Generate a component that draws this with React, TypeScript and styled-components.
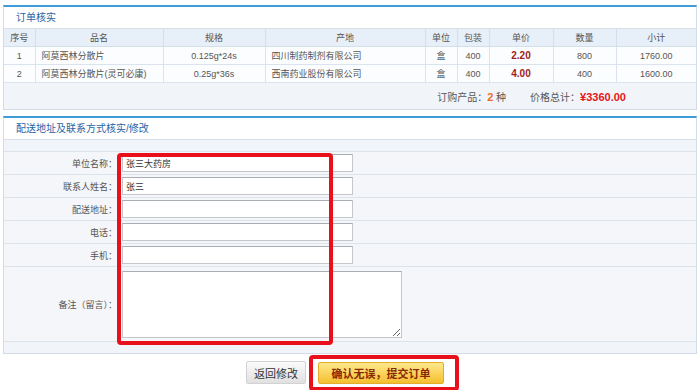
import styled, { createGlobalStyle } from "styled-components";

const GlobalStyle = createGlobalStyle`
  body {
    margin: 0;
    background: #fff;
    font-family: "Liberation Sans", "Noto Sans CJK SC", sans-serif;
    color: #555;
  }
`;

type Item = {
  no: number;
  name: string;
  spec: string;
  origin: string;
  unit: string;
  pack: number;
  price: string;
  qty: number;
  subtotal: string;
};

const items: Item[] = [
  { no: 1, name: "阿莫西林分散片", spec: "0.125g*24s", origin: "四川制药制剂有限公司", unit: "盒", pack: 400, price: "2.20", qty: 800, subtotal: "1760.00" },
  { no: 2, name: "阿莫西林分散片(灵可必康)", spec: "0.25g*36s", origin: "西南药业股份有限公司", unit: "盒", pack: 400, price: "4.00", qty: 400, subtotal: "1600.00" },
];

const columns = [
  { title: "序号", width: 31 },
  { title: "品名", width: 128 },
  { title: "规格", width: 102 },
  { title: "产地", width: 160 },
  { title: "单位", width: 32 },
  { title: "包装", width: 32 },
  { title: "单价", width: 64 },
  { title: "数量", width: 63 },
  { title: "小计", width: 80 },
];

const fields = [
  { label: "单位名称：", value: "张三大药房" },
  { label: "联系人姓名：", value: "张三" },
  { label: "配送地址：", value: "" },
  { label: "电话：", value: "" },
  { label: "手机：", value: "" },
];

const App = () => {
  return (
    <Page>
      <GlobalStyle />
      <Panel>
        <PanelTitle>订单核实</PanelTitle>
        <OrderTable>
          <colgroup>
            {columns.map((c) => (
              <col key={c.title} style={{ width: c.width }} />
            ))}
          </colgroup>
          <thead>
            <tr>
              {columns.map((c) => (
                <HeadCell key={c.title}>{c.title}</HeadCell>
              ))}
            </tr>
          </thead>
          <tbody>
            {items.map((it) => (
              <tr key={it.no}>
                <Cell>{it.no}</Cell>
                <Cell $left>{it.name}</Cell>
                <Cell>{it.spec}</Cell>
                <Cell $left>{it.origin}</Cell>
                <Cell>{it.unit}</Cell>
                <Cell>{it.pack}</Cell>
                <Cell>
                  <Price>{it.price}</Price>
                </Cell>
                <Cell>{it.qty}</Cell>
                <Cell>{it.subtotal}</Cell>
              </tr>
            ))}
            <tr>
              <SummaryCell colSpan={9}>
                订购产品：<Count>2</Count> 种
                <TotalLabel>价格总计：</TotalLabel>
                <Total>¥3360.00</Total>
              </SummaryCell>
            </tr>
          </tbody>
        </OrderTable>
      </Panel>

      <Panel>
        <PanelTitle>配送地址及联系方式核实/修改</PanelTitle>
        <Stripe />
        {fields.map((f) => (
          <FormRow key={f.label}>
            <Label>{f.label}</Label>
            <FieldCell>
              <TextInput defaultValue={f.value} />
            </FieldCell>
          </FormRow>
        ))}
        <FormRow $tall>
          <Label>备注（留言）：</Label>
          <FieldCell>
            <Note />
          </FieldCell>
        </FormRow>
        <Stripe $last />
      </Panel>

      <Actions>
        <BackButton>返回修改</BackButton>
        <SubmitButton>确认无误，提交订单</SubmitButton>
      </Actions>

      <Highlight style={{ left: 117, top: 153, width: 216, height: 192 }} />
      <Highlight style={{ left: 309, top: 355, width: 150, height: 36 }} />
    </Page>
  );
};

export default App;

const Page = styled.div`
  position: relative;
  width: 700px;
  height: 390px;
  padding: 5px 3px 0 3px;
  box-sizing: border-box;
  overflow: hidden;
`;

const Panel = styled.section`
  border: 1px solid #d3dce6;
  border-top: 2px solid #3e9bd5;
  margin-bottom: 6px;
  background: #fff;
`;

const PanelTitle = styled.h3`
  margin: 0;
  height: 21px;
  line-height: 21px;
  padding-left: 12px;
  font-size: 10px;
  font-weight: normal;
  color: #2764a6;
  border-bottom: 1px solid #d8e0e9;
`;

const OrderTable = styled.table`
  width: 100%;
  border-collapse: collapse;
  table-layout: fixed;
  font-size: 9px;
  color: #555;
`;

const HeadCell = styled.th`
  height: 17px;
  padding: 0;
  font-weight: normal;
  background: #e7eff8;
  border: 1px solid #d3dfeb;
  border-top: none;
  color: #555;
  &:first-child { border-left: none; }
  &:last-child { border-right: none; }
`;

const Cell = styled.td<{ $left?: boolean }>`
  height: 17px;
  padding: 0 6px;
  text-align: ${(p) => (p.$left ? "left" : "center")};
  background: #fcfdfe;
  border: 1px solid #dbe4ee;
  white-space: nowrap;
  overflow: hidden;
  &:first-child { border-left: none; }
  &:last-child { border-right: none; }
`;

const Price = styled.span`
  font-weight: bold;
  font-size: 10px;
  color: #9e1c1c;
`;

const SummaryCell = styled.td`
  height: 26px;
  padding: 0 70px 0 0;
  text-align: right;
  background: #f1f5f9;
  font-size: 10px;
  color: #555;
  border-top: 1px solid #dbe4ee;
`;

const Count = styled.b`
  color: #f06a1e;
  font-size: 11px;
`;

const TotalLabel = styled.span`
  margin-left: 24px;
`;

const Total = styled.b`
  color: #e6141b;
  font-size: 11px;
`;

const Stripe = styled.div<{ $last?: boolean }>`
  height: 11px;
  background: #f1f4f8;
  border-bottom: ${(p) => (p.$last ? "none" : "1px solid #dde3ea")};
`;

const FormRow = styled.div<{ $tall?: boolean }>`
  display: grid;
  grid-template-columns: 117px 1fr;
  align-items: center;
  height: ${(p) => (p.$tall ? "74px" : "22px")};
  background: #f4f6f9;
  border-bottom: 1px solid #dde3ea;
`;

const Label = styled.div`
  text-align: right;
  padding-right: 4px;
  font-size: 9px;
  color: #555;
`;

const FieldCell = styled.div`
  display: flex;
  align-items: center;
  padding-left: 1px;
`;

const TextInput = styled.input`
  box-sizing: border-box;
  width: 231px;
  height: 18px;
  padding: 0 3px;
  border: 1px solid #c3c7cc;
  border-top-color: #a9aeb4;
  background: #fff;
  font-family: "Liberation Sans", "Noto Sans CJK SC", sans-serif;
  font-size: 9px;
  color: #333;
  outline: none;
`;

const Note = styled.textarea`
  box-sizing: border-box;
  width: 280px;
  height: 67px;
  border: 1px solid #c3c7cc;
  border-top-color: #a9aeb4;
  background: #fff;
  outline: none;
`;

const Actions = styled.div`
  display: flex;
  justify-content: center;
  align-items: center;
  gap: 12px;
  padding: 1px 10px 0 0;
`;

const BackButton = styled.button`
  width: 60px;
  height: 23px;
  padding: 0;
  border: 1px solid #d2d2d2;
  border-radius: 2px;
  background: linear-gradient(#fbfbfb, #e0e0e0);
  color: #333;
  font-family: "Noto Sans CJK SC", sans-serif;
  font-size: 11px;
`;

const SubmitButton = styled.button`
  width: 126px;
  height: 22px;
  padding: 0;
  border: 1px solid #e3ac2c;
  border-radius: 2px;
  background: linear-gradient(#fee98c, #f5bf2e);
  color: #8a2806;
  font-family: "Noto Sans CJK SC", sans-serif;
  font-size: 11px;
  font-weight: bold;
`;

const Highlight = styled.div`
  position: absolute;
  box-sizing: border-box;
  border: 4px solid #e8101a;
  border-radius: 4px;
  pointer-events: none;
`;
